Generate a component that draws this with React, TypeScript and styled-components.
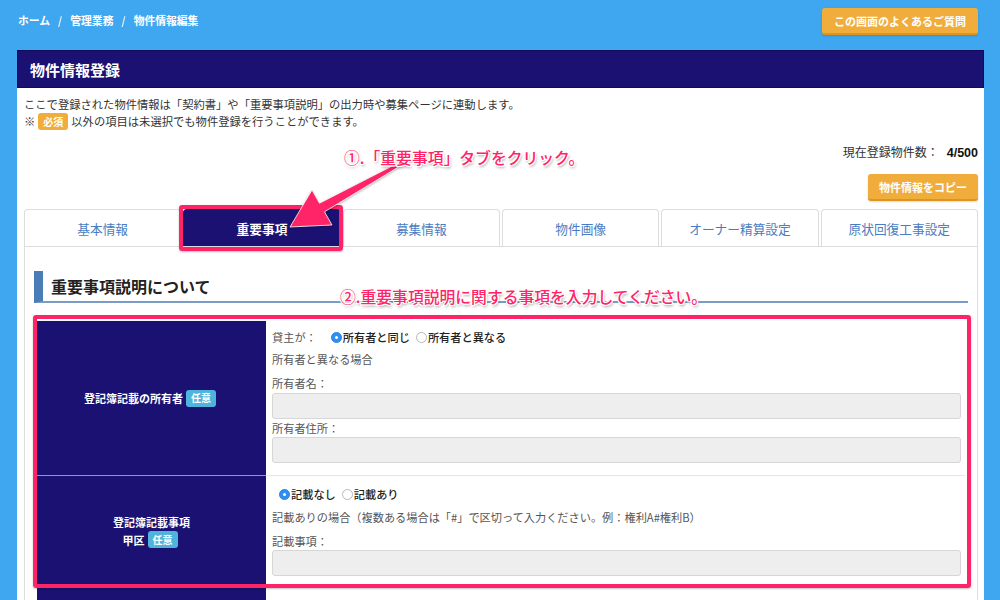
import { createGlobalStyle, styled } from 'styled-components';

const GlobalStyle = createGlobalStyle`
  html, body {
    margin: 0;
    padding: 0;
    overflow: hidden;
    background: #3fa7ef;
  }
  body {
    font-family: 'Noto Sans CJK JP', 'Noto Sans', sans-serif;
    color: #333;
  }
  * {
    box-sizing: border-box;
  }
`;

const NAVY = '#1b1173';
const PINK = '#ff2468';
const ORANGE = '#f0ad3b';

const Page = styled.div`
  position: relative;
  width: 1000px;
  height: 600px;
  padding: 8px 16px 0 17px;
`;

const TopBar = styled.div`
  display: flex;
  justify-content: space-between;
  align-items: flex-start;
  height: 42px;
  padding-left: 1px;
  padding-right: 6px;
`;

const Breadcrumb = styled.div`
  display: flex;
  align-items: center;
  height: 24px;
  font-size: 10.8px;
  font-weight: 700;
  color: #fff;
`;

const Sep = styled.span`
  margin: 0 8px;
  opacity: 0.85;
`;

const OrangeButton = styled.button<{ $w: number }>`
  width: ${(p) => p.$w}px;
  height: 27px;
  border: none;
  border-bottom: 2px solid #dc961f;
  border-radius: 3px;
  background: ${ORANGE};
  color: #fff;
  font-family: inherit;
  font-size: 11px;
  font-weight: 700;
  padding: 0;
  box-shadow: 0 1px 2px rgba(0, 0, 0, 0.15);
`;

const Panel = styled.div`
  background: #fff;
  height: 560px;
  overflow: hidden;
`;

const PanelHeader = styled.div`
  height: 38px;
  background: ${NAVY};
  border: 1px solid #120b55;
  display: flex;
  align-items: center;
  padding-left: 12px;
  font-size: 15px;
  font-weight: 700;
  color: #fff;
`;

const PanelBody = styled.div`
  padding: 8px 6px 0 7px;
`;

const Intro = styled.p`
  margin: 0;
  font-size: 11.3px;
  line-height: 17px;
  color: #333;
  display: flex;
  align-items: center;
`;

const Badge = styled.span<{ $bg: string }>`
  display: inline-flex;
  align-items: center;
  justify-content: center;
  height: 17px;
  padding: 0 5px;
  border-radius: 3px;
  background: ${(p) => p.$bg};
  color: #fff;
  font-size: 10px;
  font-weight: 700;
  margin: 0 3px;
`;

const CountRow = styled.div`
  margin-top: 13px;
  line-height: 18px;
  text-align: right;
  font-size: 12px;
  color: #333;

  b {
    margin-left: 8px;
    font-family: 'Liberation Sans', Arial, sans-serif;
    font-size: 12.5px;
    color: #111;
  }
`;

const CopyRow = styled.div`
  display: flex;
  justify-content: flex-end;
  margin-top: 12px;
`;

const TabBar = styled.div`
  display: flex;
  gap: 2px;
  margin-top: 8px;
  height: 38px;
  border-bottom: 1px solid #ddd;
`;

const Tab = styled.div<{ $active?: boolean }>`
  flex: 1;
  display: flex;
  align-items: center;
  justify-content: center;
  border: 1px solid ${(p) => (p.$active ? NAVY : '#ddd')};
  border-bottom: none;
  border-radius: 4px 4px 0 0;
  background: ${(p) => (p.$active ? NAVY : '#fff')};
  color: ${(p) => (p.$active ? '#fff' : '#4a7cc1')};
  font-size: 12.7px;
  font-weight: ${(p) => (p.$active ? 700 : 400)};
`;

const TabContent = styled.div`
  border-left: 1px solid #ddd;
  border-right: 1px solid #ddd;
  padding: 24px 9px 0 9px;
  height: 400px;
`;

const SectionTitle = styled.h2`
  margin: 0;
  display: flex;
  align-items: center;
  height: 32px;
  border-left: 9px solid #4a7db6;
  border-bottom: 2px solid #7a9cc7;
  padding-left: 8px;
  font-size: 16px;
  font-weight: 700;
  color: #222;
`;

const Table = styled.div`
  margin: 18px 3px 0;
  display: grid;
  grid-template-columns: 229px 1fr;
`;

const Th = styled.div<{ $last?: boolean }>`
  background: ${NAVY};
  border-top: 1px solid #9a9a9a;
  display: flex;
  flex-direction: column;
  align-items: center;
  justify-content: center;
  color: #fff;
  font-size: 11px;
  font-weight: 700;
  line-height: 18px;
  text-align: center;

  &:first-child {
    border-top: none;
  }
`;

const ThLine = styled.div`
  display: flex;
  align-items: center;
`;

const Td = styled.div<{ $pt: number; $pb: number }>`
  border-top: 1px solid #e6e6e6;
  padding: ${(p) => p.$pt}px 4px ${(p) => p.$pb}px 6px;
  font-size: 11.2px;
  color: #555;

  &:nth-child(2) {
    border-top: none;
  }
`;

const Line = styled.div<{ $mt?: number; $indent?: number }>`
  display: flex;
  align-items: center;
  height: 18px;
  margin-top: ${(p) => p.$mt ?? 0}px;
  padding-left: ${(p) => p.$indent ?? 0}px;
`;

const Lead = styled.span`
  margin-right: 14px;
`;

const RadioLabel = styled.label`
  display: inline-flex;
  align-items: center;
  color: #222;
  font-weight: 500;
  margin-right: 6px;
`;

const RadioDot = styled.span<{ $on?: boolean }>`
  width: 11px;
  height: 11px;
  border-radius: 50%;
  margin-right: 1px;
  background: ${(p) => (p.$on ? '#2f8ff2' : '#fff')};
  border: 1px solid ${(p) => (p.$on ? '#2a84e4' : '#b8b8b8')};
  display: inline-flex;
  align-items: center;
  justify-content: center;

  &::after {
    content: '';
    width: 3px;
    height: 3px;
    border-radius: 50%;
    background: ${(p) => (p.$on ? '#fff' : 'transparent')};
  }
`;

const Input = styled.div<{ $mt?: number }>`
  height: 26px;
  margin-top: ${(p) => p.$mt ?? 0}px;
  background: #eee;
  border: 1px solid #d6d6d6;
  border-radius: 3px;
`;

const EmptyTh = styled(Th)`
  height: 40px;
`;

const Annotation = styled.div<{ $x: number; $y: number }>`
  position: absolute;
  left: ${(p) => p.$x}px;
  top: ${(p) => p.$y}px;
  font-size: 15.8px;
  font-weight: 500;
  line-height: 18px;
  color: ${PINK};
  white-space: nowrap;
  text-shadow: 1px 0 0 #fff, -1px 0 0 #fff, 0 1px 0 #fff, 0 -1px 0 #fff,
    1px 1px 0 #fff, -1px -1px 0 #fff, 1px -1px 0 #fff, -1px 1px 0 #fff,
    1px 2px 3px rgba(0, 0, 0, 0.45);
`;

const Frame = styled.div<{ $x: number; $y: number; $w: number; $h: number }>`
  position: absolute;
  left: ${(p) => p.$x}px;
  top: ${(p) => p.$y}px;
  width: ${(p) => p.$w}px;
  height: ${(p) => p.$h}px;
  border: 4px solid ${PINK};
  border-radius: 3px;
  box-shadow: 0 1px 2px rgba(0, 0, 0, 0.25);
`;

const Arrow = styled.svg`
  position: absolute;
  left: 280px;
  top: 150px;
  filter: drop-shadow(0 1px 1px rgba(0, 0, 0, 0.3));
`;

const tabs = ['基本情報', '重要事項', '募集情報', '物件画像', 'オーナー精算設定', '原状回復工事設定'];

export default function App() {
  return (
    <>
      <GlobalStyle />
      <Page>
        <TopBar>
          <Breadcrumb>
            ホーム<Sep>/</Sep>管理業務<Sep>/</Sep>物件情報編集
          </Breadcrumb>
          <OrangeButton $w={156}>この画面のよくあるご質問</OrangeButton>
        </TopBar>

        <Panel>
          <PanelHeader>物件情報登録</PanelHeader>
          <PanelBody>
            <Intro>ここで登録された物件情報は「契約書」や「重要事項説明」の出力時や募集ページに連動します。</Intro>
            <Intro>
              ※<Badge $bg={ORANGE}>必須</Badge>以外の項目は未選択でも物件登録を行うことができます。
            </Intro>
            <CountRow>
              現在登録物件数：<b>4/500</b>
            </CountRow>
            <CopyRow>
              <OrangeButton $w={110}>物件情報をコピー</OrangeButton>
            </CopyRow>

            <TabBar>
              {tabs.map((t, i) => (
                <Tab key={t} $active={i === 1}>
                  {t}
                </Tab>
              ))}
            </TabBar>

            <TabContent>
              <SectionTitle>重要事項説明について</SectionTitle>
              <Table>
                <Th>
                  <ThLine>
                    登記簿記載の所有者<Badge $bg="#4fb4dc">任意</Badge>
                  </ThLine>
                </Th>
                <Td $pt={7} $pb={12}>
                  <Line>
                    <Lead>貸主が：</Lead>
                    <RadioLabel>
                      <RadioDot $on />
                      所有者と同じ
                    </RadioLabel>
                    <RadioLabel>
                      <RadioDot />
                      所有者と異なる
                    </RadioLabel>
                  </Line>
                  <Line $mt={4}>所有者と異なる場合</Line>
                  <Line $mt={6}>所有者名：</Line>
                  <Input $mt={1} />
                  <Line>所有者住所：</Line>
                  <Input />
                </Td>

                <Th $last>
                  <ThLine>登記簿記載事項</ThLine>
                  <ThLine>
                    甲区<Badge $bg="#4fb4dc">任意</Badge>
                  </ThLine>
                </Th>
                <Td $pt={9} $pb={9}>
                  <Line $indent={7}>
                    <RadioLabel>
                      <RadioDot $on />
                      記載なし
                    </RadioLabel>
                    <RadioLabel>
                      <RadioDot />
                      記載あり
                    </RadioLabel>
                  </Line>
                  <Line $mt={5}>記載ありの場合（複数ある場合は「#」で区切って入力ください。例：権利A#権利B）</Line>
                  <Line $mt={6}>記載事項：</Line>
                  <Input />
                </Td>

                <EmptyTh $last />
                <Td $pt={0} $pb={0} />
              </Table>
            </TabContent>
          </PanelBody>
        </Panel>

        <Frame $x={179} $y={205} $w={164} $h={46} />
        <Frame $x={33} $y={315} $w={938} $h={273} />

        <Arrow width="130" height="90" viewBox="0 0 130 90">
          <polygon
            points="10,77 52,75 44.5,61.8 121,15.5 119,12.5 39.5,53.2 32,40"
            fill={PINK}
            stroke="#fff"
            strokeWidth="0.8"
            strokeLinejoin="round"
          />
        </Arrow>

        <Annotation $x={344} $y={149}>①.「重要事項」タブをクリック。</Annotation>
        <Annotation $x={340} $y={288}>②.重要事項説明に関する事項を入力してください。</Annotation>
      </Page>
    </>
  );
}
